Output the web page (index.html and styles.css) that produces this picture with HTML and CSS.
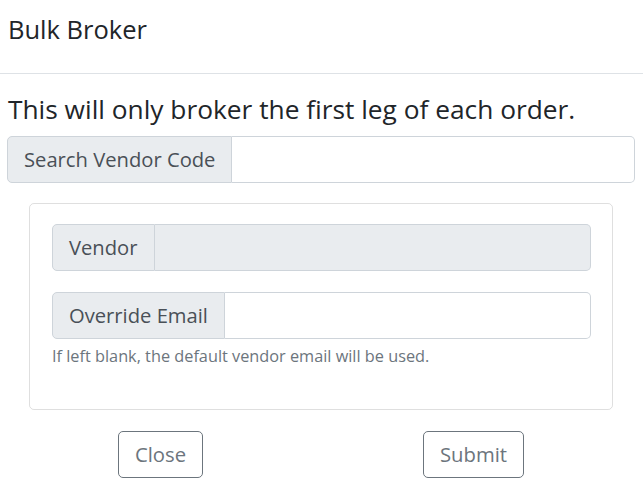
FILE: index.html
```html
<!DOCTYPE html>
<html lang="en">
<head>
    <meta charset="UTF-8">
    <title>Bulk Broker</title>
    <link rel="stylesheet" href="styles.css">
</head>
<body>
    <div class="modal">
        <div class="modal-header">
            <h5 class="modal-title">Bulk Broker</h5>
        </div>
        <div class="modal-body">
            <h4 class="notice">This will only broker the first leg of each order.</h4>
            <div class="input-group">
                <span class="input-group-text">Search Vendor Code</span>
                <input type="text" class="form-control">
            </div>
            <div class="card">
                <div class="input-group">
                    <span class="input-group-text">Vendor</span>
                    <input type="text" class="form-control" readonly>
                </div>
                <div class="input-group spaced">
                    <span class="input-group-text">Override Email</span>
                    <input type="text" class="form-control">
                </div>
                <small class="help">If left blank, the default vendor email will be used.</small>
            </div>
            <div class="actions">
                <div class="col"><button class="btn">Close</button></div>
                <div class="col"><button class="btn">Submit</button></div>
            </div>
        </div>
    </div>
</body>
</html>
```

FILE: styles.css
```css
* {
    box-sizing: border-box;
}
body, html {
    margin: 0;
    padding: 0;
    background: #fff;
    font-family: "Open Sans", "Noto Sans", sans-serif;
    color: #212529;
}
.modal-header {
    height: 74px;
    padding: 14px 8px 0 8px;
    border-bottom: 1px solid #dee2e6;
}
.modal-title {
    margin: 0;
    font-size: 25.5px;
    font-weight: 500;
    line-height: 1.2;
}
.modal-body {
    padding: 0 8px 12px 7px;
}
.notice {
    margin: 20px 0 10px 1px;
    font-size: 26.3px;
    font-weight: 500;
    line-height: 1.2;
}
.input-group {
    display: flex;
    height: 47px;
}
.input-group-text {
    display: flex;
    align-items: center;
    padding: 0 16px;
    font-size: 20.2px;
    color: #495057;
    background-color: #e9ecef;
    border: 1px solid #ced4da;
    border-radius: 5px 0 0 5px;
    white-space: nowrap;
}
.form-control {
    flex: 1;
    min-width: 0;
    margin: 0;
    border: 1px solid #ced4da;
    border-left: none;
    border-radius: 0 5px 5px 0;
    background: #fff;
    font: inherit;
}
.form-control[readonly] {
    background-color: #e9ecef;
}
.card {
    margin: 20px 22px 0 22px;
    padding: 20px 21px 0 22px;
    height: 207px;
    border: 1px solid rgba(0, 0, 0, 0.125);
    border-radius: 5px;
}
.spaced {
    margin-top: 21px;
}
.help {
    display: block;
    margin-top: 5px;
    font-size: 16.3px;
    line-height: 1.5;
    color: #6c757d;
}
.actions {
    display: grid;
    grid-template-columns: 1fr 1fr;
    margin: 21px 5px 0 -3px;
}
.col {
    text-align: center;
}
.btn {
    height: 47px;
    padding: 0 16px;
    font: inherit;
    font-size: 20.3px;
    color: #6c757d;
    background: #fff;
    border: 1px solid #6c757d;
    border-radius: 5px;
}
```
